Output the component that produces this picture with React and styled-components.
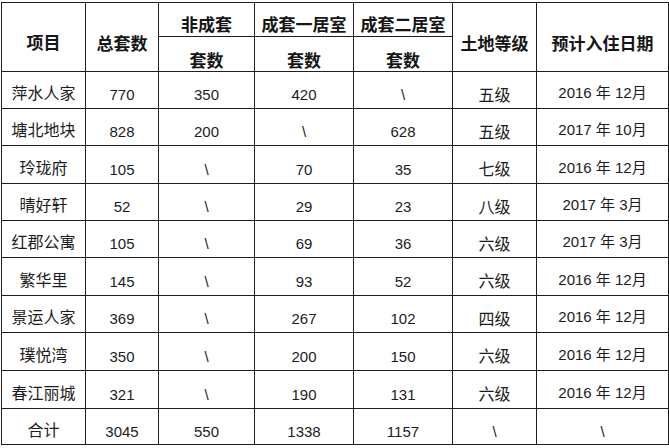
import React from "react";
import styled, { createGlobalStyle } from "styled-components";

const Global = createGlobalStyle`
  html, body { margin: 0; padding: 0; background: #fff; }
  body { font-family: "Liberation Sans", "Noto Sans CJK SC", sans-serif; color: #1c1c1c; }
`;

const Page = styled.div`
  padding: 2px 0 0 1px;
  width: 669px;
  height: 448px;
  box-sizing: border-box;
  background: #fff;
`;

const Table = styled.table`
  border-collapse: collapse;
  table-layout: fixed;
  width: 667px;
  border: 1px solid #1e1e1e;
`;

const Head = styled.th`
  border: 1px solid #1e1e1e;
  padding: ${(p) => p.$pad || 8}px 0 0 0;
  height: ${(p) => p.$h}px;
  box-sizing: border-box;
  text-align: center;
  vertical-align: middle;
  font-family: "Noto Sans CJK SC", sans-serif;
  font-weight: 700;
  font-size: 17px;
  line-height: 20px;
  color: #161616;
  white-space: nowrap;
`;

const Cell = styled.td`
  border: 1px solid #1e1e1e;
  height: ${(p) => p.$h}px;
  box-sizing: border-box;
  padding: ${(p) => p.$pad}px 0 0 0;
  text-align: center;
  vertical-align: middle;
  font-family: ${(p) =>
    p.$cjk
      ? `"Noto Sans CJK SC", sans-serif`
      : `"Liberation Sans", "Noto Sans CJK SC", sans-serif`};
  font-size: ${(p) => (p.$cjk ? 16 : 15)}px;
  line-height: 18px;
  color: #1c1c1c;
  white-space: nowrap;
`;

const widths = [84, 73, 96, 99, 99, 84, 132];

const rows = [
  ["萍水人家", "770", "350", "420", "\\", "五级", "2016 年 12月"],
  ["塘北地块", "828", "200", "\\", "628", "五级", "2017 年 10月"],
  ["玲珑府", "105", "\\", "70", "35", "七级", "2016 年 12月"],
  ["晴好轩", "52", "\\", "29", "23", "八级", "2017 年 3月"],
  ["红郡公寓", "105", "\\", "69", "36", "六级", "2017 年 3月"],
  ["繁华里", "145", "\\", "93", "52", "六级", "2016 年 12月"],
  ["景运人家", "369", "\\", "267", "102", "四级", "2016 年 12月"],
  ["璞悦湾", "350", "\\", "200", "150", "六级", "2016 年 12月"],
  ["春江丽城", "321", "\\", "190", "131", "六级", "2016 年 12月"],
  ["合计", "3045", "550", "1338", "1157", "\\", "\\"],
];

const heights = [37, 37, 38, 37, 37, 38, 37, 38, 38, 36];
const pads = [4, 10, 10, 10, 10, 7, 6];
const cjkCols = [true, false, false, false, false, true, false];

export default function App() {
  return (
    <>
      <Global />
      <Page>
        <Table>
          <colgroup>
            {widths.map((w, i) => (
              <col key={i} style={{ width: w }} />
            ))}
          </colgroup>
          <thead>
            <tr>
              <Head rowSpan={2} $h={34} $pad={10}>项目</Head>
              <Head rowSpan={2} $h={34} $pad={12}>总套数</Head>
              <Head $h={34} $pad={9}>非成套</Head>
              <Head $h={34} $pad={9}>成套一居室</Head>
              <Head $h={34} $pad={9}>成套二居室</Head>
              <Head rowSpan={2} $h={34} $pad={12}>土地等级</Head>
              <Head rowSpan={2} $h={34} $pad={12}>预计入住日期</Head>
            </tr>
            <tr>
              <Head $h={35} $pad={11}>套数</Head>
              <Head $h={35} $pad={11}>套数</Head>
              <Head $h={35} $pad={11}>套数</Head>
            </tr>
          </thead>
          <tbody>
            {rows.map((r, ri) => (
              <tr key={ri}>
                {r.map((v, ci) => (
                  <Cell
                    key={ci}
                    $h={heights[ri]}
                    $pad={v === "\\" ? 10 : pads[ci]}
                    $cjk={cjkCols[ci] && v !== "\\"}
                  >
                    {v}
                  </Cell>
                ))}
              </tr>
            ))}
          </tbody>
        </Table>
      </Page>
    </>
  );
}
